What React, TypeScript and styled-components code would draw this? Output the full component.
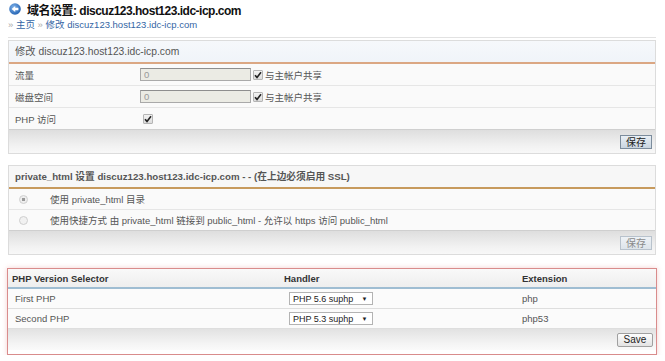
import React from 'react'
import styled, { createGlobalStyle } from 'styled-components'

const GlobalStyle = createGlobalStyle`
	body {
		margin: 0;
		background: #fff;
		font-family: "Liberation Sans", "Noto Sans CJK SC", sans-serif;
		font-size: 9.5px;
		color: #444;
	}
`

const DOMAIN = 'discuz123.host123.idc-icp.com'

const PHP_ROWS = [
	{ name: 'First PHP', handler: 'PHP 5.6 suphp', ext: 'php' },
	{ name: 'Second PHP', handler: 'PHP 5.3 suphp', ext: 'php53' },
]

const QUOTA_ROWS = [
	{ label: '流量', value: '0' },
	{ label: '磁盘空间', value: '0' },
]

const BackIcon = () => (
	<svg width="12" height="12" viewBox="0 0 12 12">
		<defs>
			<radialGradient id="bg" cx="0.4" cy="0.35" r="0.7">
				<stop offset="0" stopColor="#7fb2ea" />
				<stop offset="1" stopColor="#1f5fb0" />
			</radialGradient>
		</defs>
		<circle cx="6" cy="6" r="5.8" fill="url(#bg)" />
		<path d="M2.6 6 L6.2 3 V4.8 H9.4 V7.2 H6.2 V9 Z" fill="#fff" />
	</svg>
)

const Check = () => (
	<CheckBox>
		<svg width="8" height="8" viewBox="0 0 8 8">
			<path d="M1 4.2 L3 6.4 L7 1.2" stroke="#222" strokeWidth="1.6" fill="none" />
		</svg>
	</CheckBox>
)

export default function App() {
	return (
		<>
			<GlobalStyle />
			<Page>
				<Title>
					<BackIcon />
					<span>域名设置: {DOMAIN}</span>
				</Title>
				<Crumbs>
					<Raquo>»</Raquo> <a>主页</a> <Raquo>»</Raquo> <a>修改 {DOMAIN}</a>
				</Crumbs>

				<Panel>
					<Head $line="#dba783" $bg="linear-gradient(#f6f8fb, #f0f4f9)" $size={10.3}>
						修改 {DOMAIN}
					</Head>
					{QUOTA_ROWS.map((r) => (
						<FormRow key={r.label}>
							<Label>{r.label}</Label>
							<Input value={r.value} readOnly />
							<Check />
							<Share>与主帐户共享</Share>
						</FormRow>
					))}
					<FormRow $last>
						<Label>PHP 访问</Label>
						<Indent>
							<Check />
						</Indent>
					</FormRow>
					<Footer>
						<Button>保存</Button>
					</Footer>
				</Panel>

				<Panel $gap={11}>
					<Head $line="#c79a5d" $bold $size={9.7}>
						private_html 设置 {DOMAIN} - - (在上边必须启用 SSL)
					</Head>
					<RadioRow>
						<Radio $on />
						<span>使用 private_html 目录</span>
					</RadioRow>
					<RadioRow $last>
						<Radio />
						<span>使用快捷方式 由 private_html 链接到 public_html - 允许以 https 访问 public_html</span>
					</RadioRow>
					<Footer>
						<Button $disabled>保存</Button>
					</Footer>
				</Panel>

				<PhpPanel>
					<PhpHead>
						<span>PHP Version Selector</span>
						<span>Handler</span>
						<span>Extension</span>
					</PhpHead>
					{PHP_ROWS.map((r) => (
						<PhpRow key={r.name}>
							<span>{r.name}</span>
							<span>
								<Select>
									{r.handler}
									<Arrow>▼</Arrow>
								</Select>
							</span>
							<span>{r.ext}</span>
						</PhpRow>
					))}
					<PhpFooter>
						<SaveButton>Save</SaveButton>
					</PhpFooter>
				</PhpPanel>
			</Page>
		</>
	)
}

const Page = styled.div`
	width: 665px;
	padding: 0 9px 0 8px;
	box-sizing: border-box;
`

const Title = styled.div`
	height: 18px;
	display: flex;
	align-items: center;
	gap: 5px;
	padding-left: 1px;
	font-size: 12px;
	font-weight: bold;
	letter-spacing: -0.5px;
	color: #111;
	span {
		margin-left: 1px;
	}
`

const Crumbs = styled.div`
	height: 14px;
	line-height: 14px;
	padding-bottom: 5px;
	border-bottom: 1px solid #e2e2e2;
	font-size: 9.5px;
	a {
		color: #3465a4;
	}
`

const Raquo = styled.span`
	color: #aaa;
`

const Panel = styled.div<{ $gap?: number }>`
	margin-top: ${(p) => p.$gap ?? 2}px;
	border: 1px solid #dcdcdc;
	background: #fafafa;
`

const Head = styled.div<{ $line: string; $bg?: string; $bold?: boolean; $size: number }>`
	height: 21px;
	line-height: 21px;
	padding-left: 6px;
	background: ${(p) => p.$bg ?? '#f7f7f7'};
	border-bottom: 2px solid ${(p) => p.$line};
	font-size: ${(p) => p.$size}px;
	font-weight: ${(p) => (p.$bold ? 'bold' : 'normal')};
	color: #555;
	white-space: nowrap;
`

const FormRow = styled.div<{ $last?: boolean }>`
	height: 21px;
	display: flex;
	align-items: center;
	padding-left: 6px;
	border-bottom: 1px solid ${(p) => (p.$last ? '#cfcfcf' : '#e6e6e6')};
	color: #555;
`

const Label = styled.span`
	width: 125px;
`

const Indent = styled.span`
	padding-left: 3px;
	display: flex;
`

const Input = styled.input`
	width: 111px;
	height: 13px;
	box-sizing: border-box;
	margin: 0 2px 0 0;
	padding: 0 3px;
	border: 1px solid #a9a9a9;
	border-top-color: #8e8e8e;
	background: #ebebe4;
	font-family: "Liberation Sans", sans-serif;
	font-size: 9.5px;
	color: #999;
`

const CheckBox = styled.span`
	width: 8px;
	height: 8px;
	display: inline-flex;
	align-items: center;
	justify-content: center;
	border: 1px solid #b5b5b5;
	border-radius: 1px;
	background: linear-gradient(#f3f3f3, #dcdcdc);
`

const Share = styled.span`
	margin-left: 2px;
	font-size: 9.5px;
`

const Footer = styled.div`
	height: 23px;
	display: flex;
	align-items: center;
	justify-content: flex-end;
	padding-right: 3px;
	background: linear-gradient(#dedede, #f2f2f2 70%, #f8f8f8);
`

const Button = styled.button<{ $disabled?: boolean }>`
	height: 14px;
	width: 32px;
	padding: 0;
	border: 1px solid ${(p) => (p.$disabled ? '#b8c2cc' : '#7c8c9c')};
	background: ${(p) =>
		p.$disabled ? 'linear-gradient(#eef2f6, #dde4ea)' : 'linear-gradient(#e9eff5, #c9d5e0)'};
	font-family: "Noto Sans CJK SC", sans-serif;
	font-size: 10px;
	line-height: 12px;
	color: ${(p) => (p.$disabled ? '#8a8a8a' : '#222')};
`

const RadioRow = styled.div<{ $last?: boolean }>`
	height: 20px;
	display: flex;
	align-items: center;
	padding-left: 10px;
	gap: 22px;
	border-bottom: 1px solid ${(p) => (p.$last ? '#cfcfcf' : '#e6e6e6')};
	color: #555;
	white-space: nowrap;
`

const Radio = styled.span<{ $on?: boolean }>`
	width: 7px;
	height: 7px;
	border-radius: 50%;
	border: 1px solid #cfcfcf;
	background: ${(p) =>
		p.$on ? 'radial-gradient(circle, #999 0 1.5px, #eee 2px)' : '#f1f1f1'};
`

const PhpPanel = styled.div`
	margin: 13px -1px 0 -1px;
	border: 1px solid #d98c8c;
	box-shadow: 0 0 5px rgba(230, 150, 150, 0.45);
	background: #fff;
	padding-bottom: 4px;
`

const grid = `
	display: grid;
	grid-template-columns: 272px 238px 1fr;
	align-items: center;
	padding-left: 4px;
`

const PhpHead = styled.div`
	${grid}
	height: 18px;
	background: linear-gradient(#f9f9f9, #eeeeee);
	border-bottom: 2px solid #9fbdd2;
	font-weight: bold;
	font-size: 9.5px;
	color: #333;
`

const PhpRow = styled.div`
	${grid}
	height: 19px;
	border-bottom: 1px solid #dedede;
	background: #fbfbfb;
	color: #555;
	span:first-child {
		padding-left: 3px;
	}
`

const Select = styled.span`
	display: inline-flex;
	align-items: center;
	height: 13px;
	box-sizing: border-box;
	margin-left: 5px;
	padding: 0 5px 0 3px;
	border: 1px solid #b3b3b3;
	background: #fff;
	color: #222;
	font-size: 9px;
	white-space: nowrap;
`

const Arrow = styled.span`
	font-size: 6px;
	margin-left: 5px;
`

const PhpFooter = styled.div`
	height: 21px;
	display: flex;
	align-items: center;
	justify-content: flex-end;
	padding-right: 3px;
	background: linear-gradient(#e2e2e2, #f4f4f4 70%, #fafafa);
`

const SaveButton = styled.button`
	height: 14px;
	width: 36px;
	padding: 0;
	border: 1px solid #a0a0a0;
	border-radius: 2px;
	background: linear-gradient(#fdfdfd, #e3e3e3);
	font-family: "Liberation Sans", sans-serif;
	font-size: 10px;
	color: #222;
`
